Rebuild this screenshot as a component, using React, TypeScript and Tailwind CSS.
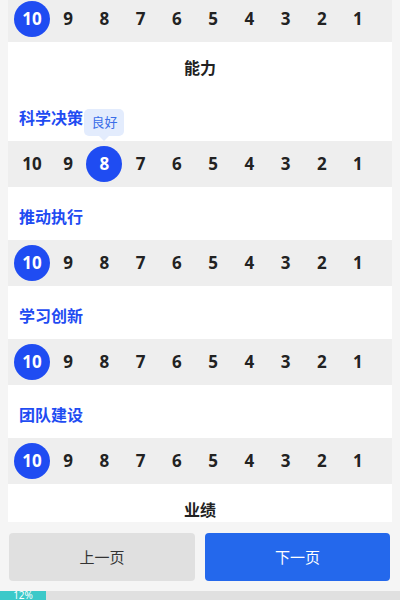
import React from "react";

const NUMS = [10, 9, 8, 7, 6, 5, 4, 3, 2, 1];

function Row({ selected, tip }: { selected: number; tip?: string }) {
  return (
    <div className="h-[46px] bg-[#eeeeee] flex items-center pl-[6px]">
      <div className="w-[362px] flex justify-between">
        {NUMS.map((n) => (
          <div
            key={n}
            className={
              n === selected
                ? "relative w-9 h-9 rounded-full bg-[#1f4cf2] text-white flex items-center justify-center text-[17px] font-bold"
                : "relative w-9 h-9 rounded-full text-[#222222] flex items-center justify-center text-[17px] font-bold"
            }
          >
            {n}
            {n === selected && tip ? (
              <div className="absolute bottom-[46px] left-1/2 -translate-x-1/2 h-[27px] px-[7px] rounded-[5px] bg-[#e3ecfd] text-[#3a6ee8] text-[13px] font-normal leading-[27px] whitespace-nowrap">
                {tip}
                <div className="absolute top-full left-1/2 -translate-x-1/2 w-0 h-0 border-x-[5px] border-t-[5px] border-x-transparent border-t-[#e3ecfd]" />
              </div>
            ) : null}
          </div>
        ))}
      </div>
    </div>
  );
}

function Title({ text }: { text: string }) {
  return (
    <div className="h-[52px] flex items-center justify-center text-[16px] font-bold text-[#222222]">
      {text}
    </div>
  );
}

function Section({ label, selected, tip, gap }: { label: string; selected: number; tip?: string; gap?: boolean }) {
  return (
    <div className={gap ? "mt-[6px]" : ""}>
      <div className="h-[47px] flex items-center pl-[11px] text-[16px] font-bold text-[#1f4cf2]">{label}</div>
      <Row selected={selected} tip={tip} />
    </div>
  );
}

export default function App() {
  return (
    <div
      className="w-[400px] h-[600px] bg-[#f5f5f5] flex flex-col overflow-hidden"
      style={{ fontFamily: '"Noto Sans", "Noto Sans CJK SC", sans-serif' }}
    >
      <div className="h-[522px] shrink-0 overflow-hidden px-2">
        <div className="bg-white -mt-1">
          <Row selected={10} />
          <Title text="能力" />
          <Section label="科学决策" selected={8} tip="良好" />
          <Section label="推动执行" selected={10} gap />
          <Section label="学习创新" selected={10} gap />
          <Section label="团队建设" selected={10} gap />
          <Title text="业绩" />
        </div>
      </div>
      <div className="flex gap-[10px] px-[9px] pt-[11px] shrink-0">
        <button className="w-[186px] h-12 rounded-[4px] bg-[#e0e0e0] text-[#333333] text-[15px]">上一页</button>
        <button className="w-[185px] h-12 rounded-[4px] bg-[#2468ec] text-white text-[15px]">下一页</button>
      </div>
      <div className="mt-[10px] h-[9px] bg-[#e0e0e0] shrink-0">
        <div className="w-[46px] h-full bg-[#3cc9c9] text-white text-[10px] leading-[9px] text-center">12%</div>
      </div>
    </div>
  );
}
